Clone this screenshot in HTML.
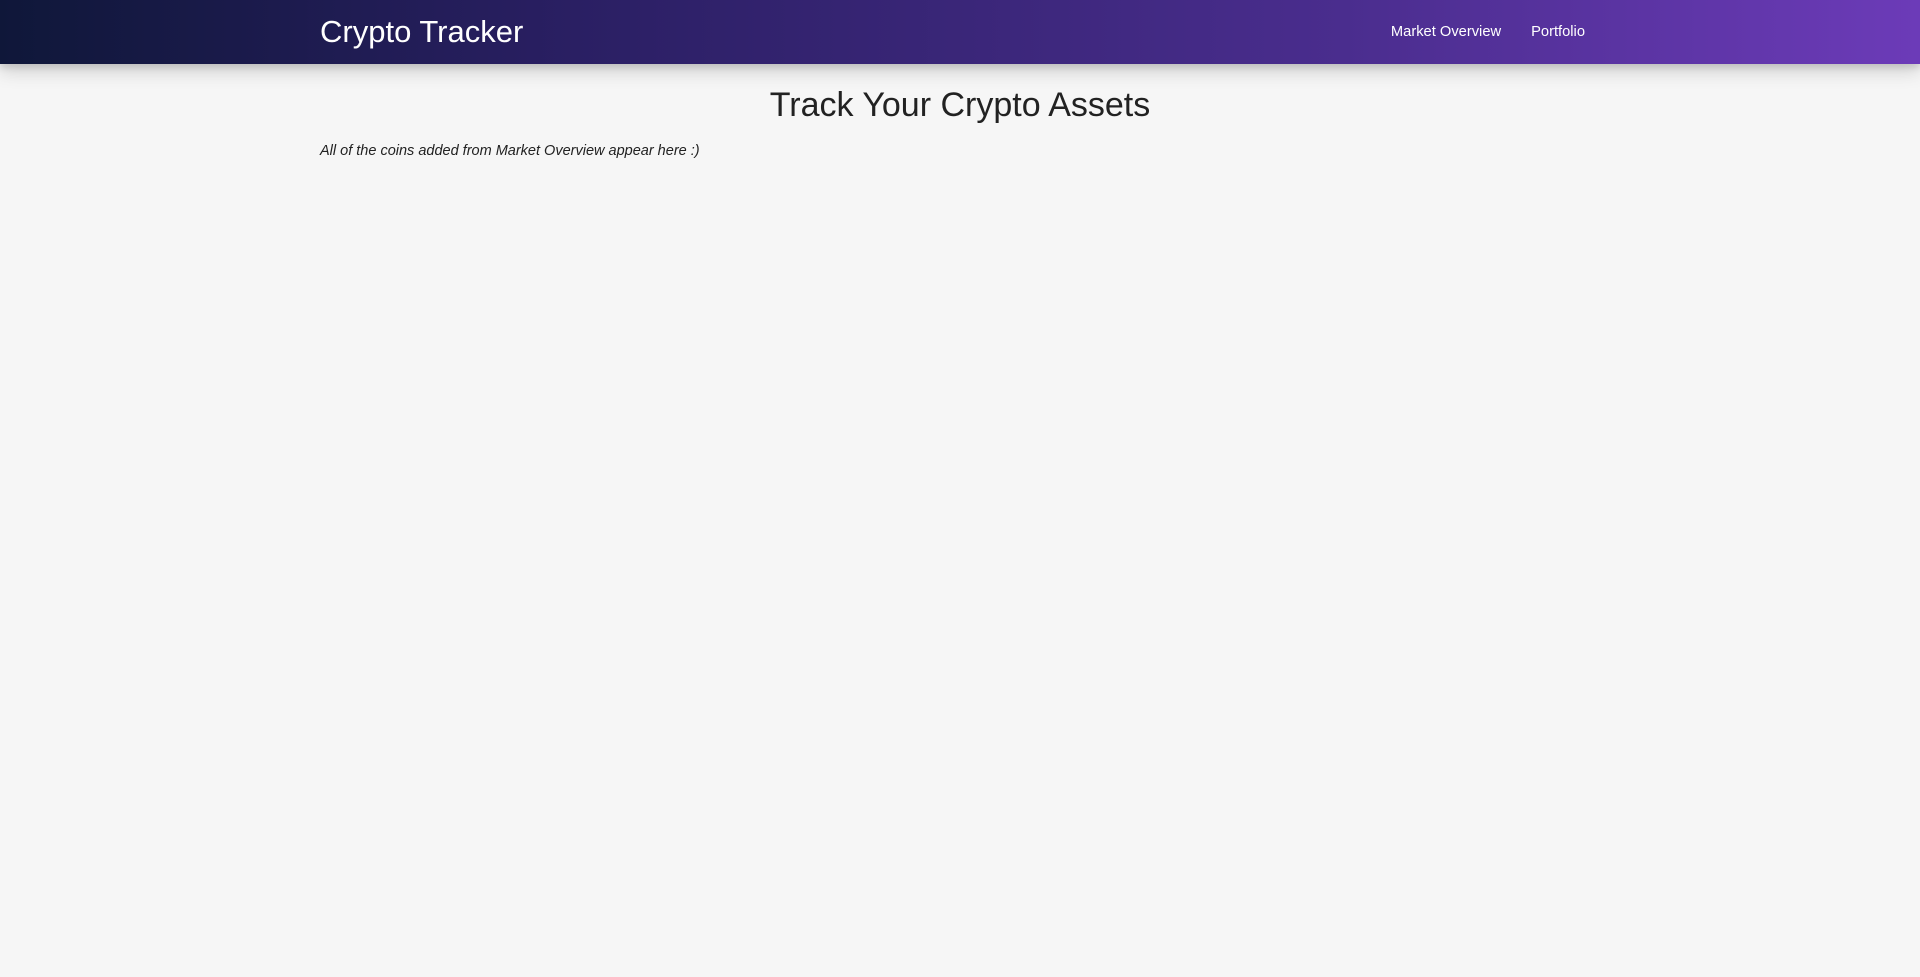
<!DOCTYPE html>
<html><head><meta charset="utf-8"><style>
html,body{margin:0;padding:0;width:1920px;height:977px;background:#f6f6f6;font-family:"Liberation Sans",sans-serif;overflow:hidden}
nav{position:relative;height:64px;background:linear-gradient(90deg,#0f1739 0%,#2a1f63 30%,#4a2d8e 70%,#6c3bb8 100%);box-shadow:0 8px 17px rgba(0,0,0,0.15),0 4px 6px rgba(0,0,0,0.1);color:#fff}
.brand{position:absolute;left:320px;top:0;line-height:64px;font-size:31px;}
.links{position:absolute;right:335px;top:0;line-height:64px;font-size:14.7px}
.links span{margin-left:30px}
h3{margin:0;position:absolute;top:86px;width:100%;text-align:center;font-weight:400;font-size:34px;color:#222}
p{position:absolute;left:320px;top:143px;margin:0;font-style:italic;font-size:14.5px;color:#222}
</style></head><body>
<nav><div class="brand">Crypto Tracker</div><div class="links"><span>Market Overview</span><span>Portfolio</span></div></nav>
<h3>Track Your Crypto Assets</h3>
<p>All of the coins added from Market Overview appear here :)</p>
</body></html>
